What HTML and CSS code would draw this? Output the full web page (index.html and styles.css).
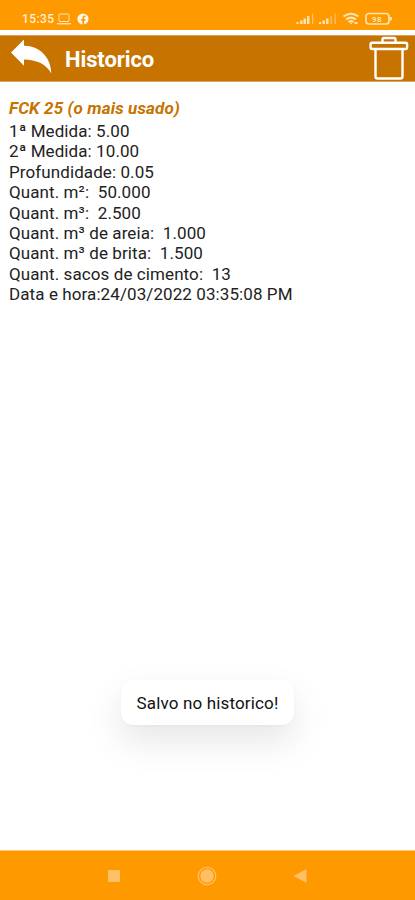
FILE: index.html
```html
<!DOCTYPE html>
<html lang="pt-BR">
<head>
<meta charset="utf-8">
<meta name="viewport" content="width=device-width, initial-scale=1">
<title>Historico</title>
<link rel="stylesheet" href="styles.css">
</head>
<body>
<div class="screen">
  <div class="status">
    <span class="clock">15:35</span>
    <svg class="laptop" width="14" height="12" viewBox="0 0 14 12" fill="none" stroke="#ffe3b3"><rect x="2" y="1" width="10" height="7.5" rx="1"/><path d="M0 10.7h14" stroke-width="1.4"/></svg>
    <svg class="social" width="12" height="12" viewBox="0 0 12 12"><circle cx="6" cy="6" r="5.6" fill="#fff6e5"/><path d="M6.3 12V5q0-1.900 2.200-1.700M4.200 6.900h4" fill="none" stroke="#ff9900" stroke-width="1.600"/></svg>
    <svg class="signals" width="96" height="14" viewBox="0 0 96 14" fill="#ffe3b3">
      <path d="M.5 10h2v2h-2zM4 8.500h2.500v3.500h-2.500zM7.500 6.500h2.500v5.500h-2.500zM11 4h2.500v8h-2.500z"/><path d="M16 1.500h1.200v10.500h-1.200z" opacity=".6"/>
      <path d="M23 10h2v2h-2zM26.500 8.500h2.500v3.500h-2.500zM30 6.500h2.500v5.500h-2.500z"/><path d="M34.500 4h1.200v8h-1.200zM38.500 1.500h1.200v10.500h-1.200z" opacity=".6"/>
      <g fill="none" stroke="#ffe3b3" stroke-width="2"><path d="M47.500 4.500q7.500-5.500 15 0M50 7.500q5-3.800 10 0M52.500 10q2.500-2 5 0"/></g><path d="M53.500 10.500h3l-1.500 2zM58.500 10h3v2h-3z"/>
      <rect x="70" y="1.500" width="23" height="10.500" rx="3" fill="none" stroke="#ffe3b3" stroke-width="1.700"/><path d="M94 5h1.800v3.500h-1.800z"/><text x="76" y="9.800">98</text>
    </svg>
  </div>
  <header class="bar">
    <svg class="back" width="42" height="36" viewBox="0 0 42 36"><path d="M1 13.500 14 .5v6.300C29 6.500 41 18 41.300 34.500 36 24.500 26 20.800 14 20.500v6.300z" fill="#fff"/></svg>
    <h1>Historico</h1>
    <svg class="trash" width="40" height="44" viewBox="0 0 40 44" fill="none" stroke="#fff" stroke-width="2.400" stroke-linejoin="round"><path d="M13.500 6V3.500q0-1.500 1.500-1.500h10q1.500 0 1.500 1.500V6"/><rect x="1.600" y="6.700" width="36.500" height="6.300" rx="1.500"/><path d="M6.500 13v27.500q0 2 2 2h23q2 0 2-2V13"/></svg>
  </header>
  <main>
    <h2>FCK 25 (o mais usado)</h2>
    <p>1ª Medida: 5.00</p>
    <p>2ª Medida: 10.00</p>
    <p>Profundidade: 0.05</p>
    <p>Quant. m²:&nbsp; 50.000</p>
    <p>Quant. m³:&nbsp; 2.500</p>
    <p>Quant. m³ de areia:&nbsp; 1.000</p>
    <p>Quant. m³ de brita:&nbsp; 1.500</p>
    <p>Quant. sacos de cimento:&nbsp; 13</p>
    <p>Data e hora:24/03/2022 03:35:08 PM</p>
  </main>
  <div class="toast">Salvo no historico!</div>
  <nav>
    <svg width="14" height="14" viewBox="0 0 14 14"><path d="M1 1h12v12H1z" fill="#ffbf66"/></svg>
    <svg width="20" height="20" viewBox="0 0 20 20"><circle cx="10" cy="10" r="8.700" fill="none" stroke="#ffbf66" stroke-width="1.300"/><circle cx="10" cy="10" r="6.700" fill="#ffbf66"/></svg>
    <svg width="14" height="16" viewBox="0 0 14 16"><path d="M13.500 1v14L.5 8z" fill="#ffbf66"/></svg>
  </nav>
</div>
</body>
</html>
```
FILE: styles.css
```css
* { box-sizing: border-box; margin: 0; padding: 0; }
body { font-family: Roboto, "Liberation Sans", sans-serif; background: #fff; }
svg { display: block; flex: none; }
.screen { position: relative; height: 900px; display: flex; flex-direction: column; overflow: hidden; }
.status { height: 30px; background: #ff9900; display: flex; align-items: center; padding: 8px 23px 0 22px; }
.clock { color: #fff1d9; font-size: 12px; line-height: 14px; letter-spacing: .4px; font-weight: 500; width: 35px; }
.social { margin-left: 6px; }
.signals { margin-left: auto; }
.signals text { font-size: 8px; font-weight: 700; letter-spacing: .5px; }
.bar { height: 47px; margin-top: 5px; background: #c67300; border-top: 1px solid #d9a55d; border-bottom: 1px solid #d9a55d; display: flex; align-items: center; padding: 0 6px 0 10px; }
.back { margin-top: -4px; }
.bar h1 { font-size: 22px; line-height: 26px; font-weight: 700; letter-spacing: -.1px; color: #fff; margin-left: 13px; margin-top: 2px; }
.trash { margin-left: auto; margin-top: -1px; }
main { flex: 1; padding: 14px 9px 0; color: #222; }
h2 { font-size: 17px; line-height: 24px; margin-bottom: 1px; font-weight: 700; font-style: italic; letter-spacing: .14px; color: #c67300; }
p { font-size: 17px; line-height: 20.4px; letter-spacing: .09px; white-space: nowrap; }
.toast { position: absolute; left: 121px; top: 680px; width: 173px; height: 45px; border-radius: 12px; background: #fff; color: #111; font-size: 17px; letter-spacing: .15px; line-height: 47px; text-align: center; white-space: nowrap; box-shadow: 0 16px 36px rgba(0,0,0,.1), 0 1px 3px rgba(0,0,0,.04); }
nav { height: 50px; background: #ff9900; border-top: 1px solid #ffc978; display: flex; align-items: center; justify-content: space-between; padding: 0 108px 0 107px; }
```
